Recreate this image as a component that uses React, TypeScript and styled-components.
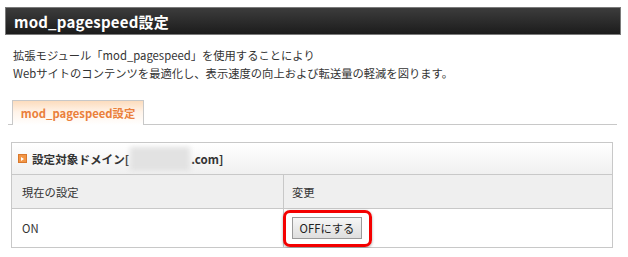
import React from "react";
import styled, { createGlobalStyle } from "styled-components";

const Global = createGlobalStyle`
  html, body { margin: 0; padding: 0; background: #fff; }
  body { font-family: "Noto Sans CJK JP", "Liberation Sans", sans-serif; color: #333; font-size: 11.3px; }
`;

const Page = styled.div`
  padding: 7px 7px 0 5px;
  width: 616px;
`;

const TitleBar = styled.div`
  height: 26px;
  border: 1px solid #7a7a7a;
  background: linear-gradient(#3c3c3c, #1c1c1c);
  display: flex;
  align-items: center;
  padding-left: 8px;
  color: #fff;
  font-family: "Noto Sans CJK JP", sans-serif;
  font-weight: 700;
  font-size: 15px;
  letter-spacing: 0.2px;
`;

const Description = styled.p`
  margin: 11px 0 0 8px;
  line-height: 18px;
  font-size: 11.3px;
  color: #333;
`;

const TabBar = styled.div`
  margin: 18px 4px 0 3px;
  padding-left: 4px;
  border-bottom: 1px solid #c8c8c8;
  display: flex;
`;

const Tab = styled.div`
  width: 130px;
  height: 24px;
  border: 1px solid #c8c8c8;
  border-bottom: none;
  background: linear-gradient(#fcdcbd 0%, #fff3e8 45%, #fff 100%);
  color: #ea803b;
  font-weight: 700;
  font-size: 11.3px;
  display: flex;
  align-items: center;
  justify-content: center;
  margin-bottom: -1px;
`;

const Panel = styled.div`
  margin: 17px 0 0 6px;
  width: 600px;
  border: 1px solid #c8c8c8;
  border-bottom: none;
`;

const PanelHead = styled.div`
  height: 31px;
  background: linear-gradient(#fff, #f0f0f0);
  border-bottom: 1px solid #c8c8c8;
  display: flex;
  align-items: center;
  padding-left: 6px;
  gap: 5px;
  font-size: 11.6px;
  font-weight: 700;
  color: #333;
`;

const Bullet = styled.span`
  width: 7px;
  height: 7px;
  border: 1px solid #d9782c;
  background: #f29545;
  display: inline-flex;
  align-items: center;
  justify-content: center;
  &::after {
    content: "";
    width: 0;
    height: 0;
    border-left: 3px solid #fff;
    border-top: 2px solid transparent;
    border-bottom: 2px solid transparent;
  }
`;

const Blur = styled.span`
  display: inline-block;
  width: 60px;
  height: 24px;
  background: #e2e2e2;
  filter: blur(2.5px);
  margin: 0 1px;
`;

const HeadText = styled.span`
  display: flex;
  align-items: center;
`;

const Table = styled.div`
  display: grid;
  grid-template-columns: 272px 1fr;
`;

const Cell = styled.div<{ $head?: boolean; $h: number; $last?: boolean }>`
  height: ${(p) => p.$h}px;
  background: ${(p) => (p.$head ? "#efefef" : "#fff")};
  border-bottom: 1px solid #c8c8c8;
  border-right: ${(p) => (p.$last ? "none" : "1px solid #c8c8c8")};
  display: flex;
  align-items: center;
  padding-left: ${(p) => (p.$last ? 8 : 10)}px;
  font-size: 11.3px;
  color: #333;
`;

const BtnWrap = styled.span`
  position: relative;
  display: inline-flex;
`;

const Button = styled.button`
  width: 70px;
  height: 22px;
  border: 1px solid #9a9a9a;
  background: linear-gradient(#f6f6f6, #dedede);
  font-family: "Noto Sans CJK JP", sans-serif;
  font-weight: 400;
  font-size: 11.3px;
  color: #222;
  padding: 0;
  display: flex;
  align-items: center;
  justify-content: center;
`;

const Highlight = styled.span`
  position: absolute;
  left: -9px;
  top: -7px;
  right: -10px;
  bottom: -8px;
  border: 3px solid #f40000;
  border-radius: 7px;
  box-shadow: 0 1px 3px rgba(0, 0, 0, 0.35);
  pointer-events: none;
`;

export default function App() {
  return (
    <>
      <Global />
      <Page>
        <TitleBar>mod_pagespeed設定</TitleBar>
        <Description>
          拡張モジュール「mod_pagespeed」を使用することにより
          <br />
          Webサイトのコンテンツを最適化し、表示速度の向上および転送量の軽減を図ります。
        </Description>
        <TabBar>
          <Tab>mod_pagespeed設定</Tab>
        </TabBar>
        <Panel>
          <PanelHead>
            <Bullet />
            <HeadText>
              設定対象ドメイン[<Blur />.com]
            </HeadText>
          </PanelHead>
          <Table>
            <Cell $head $h={33}>現在の設定</Cell>
            <Cell $head $h={33} $last>変更</Cell>
            <Cell $h={38}>ON</Cell>
            <Cell $h={38} $last>
              <BtnWrap>
                <Button>OFFにする</Button>
                <Highlight />
              </BtnWrap>
            </Cell>
          </Table>
        </Panel>
      </Page>
    </>
  );
}
